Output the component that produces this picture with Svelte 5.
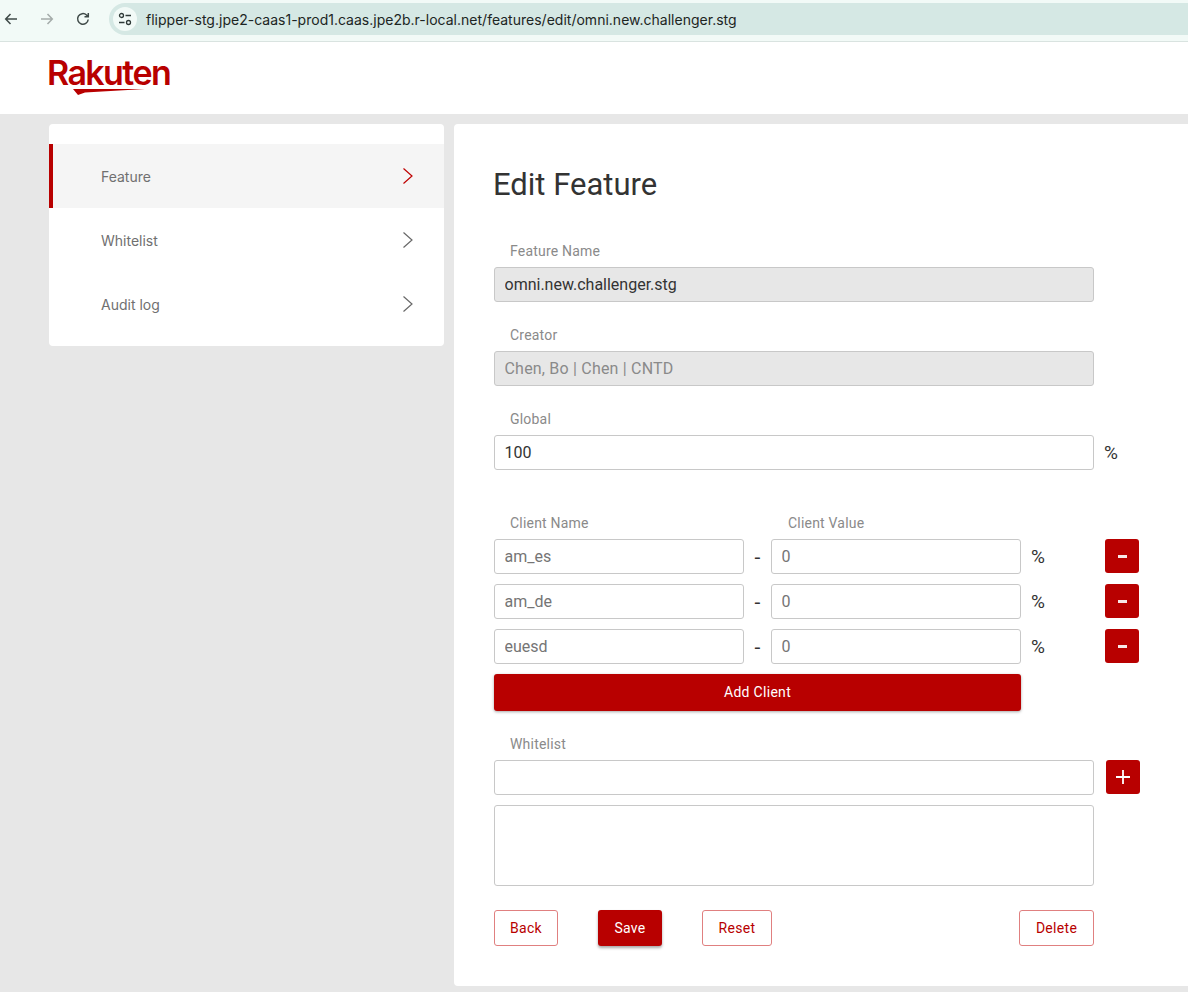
<script>
	const nav = [
		{ label: 'Feature', active: true },
		{ label: 'Whitelist', active: false },
		{ label: 'Audit log', active: false }
	];
	const clients = ['am_es', 'am_de', 'euesd'];
</script>

<div class="browser">
	<div class="tools">
		<svg width="16" height="16" viewBox="0 0 16 16" class="tool"><path d="M14 8H3M7.5 3 2.700 8l4.800 5" /></svg>
		<svg width="16" height="16" viewBox="0 0 16 16" class="tool off"><path d="M2 8h11M8.500 3l4.800 5-4.800 5" /></svg>
		<svg width="16" height="16" viewBox="0 0 16 16" class="tool"><path d="M13.200 8.500A5.300 5.300 0 1 1 11.500 4L13 5.500M13.300 2v3.800H9.500" /></svg>
	</div>
	<div class="omnibox">
		<span class="site-info">
			<svg width="14" height="14" viewBox="0 0 14 14"><circle cx="3.500" cy="3.500" r="2" /><path d="M7.500 3.500H13M1 10.500h5.500" /><circle cx="10.500" cy="10.500" r="2" /></svg>
		</span>
		<span class="url">flipper-stg.jpe2-caas1-prod1.caas.jpe2b.r-local.net/features/edit/omni.new.challenger.stg</span>
	</div>
</div>

<header>
	<div class="logo">
		<span>Rakuten</span>
		<svg width="74" height="6" viewBox="0 0 74 6"><path d="M0 0H72L12 3.500 5 6Z" /></svg>
	</div>
</header>

<div class="page">
	<aside>
		<ul>
			{#each nav as item}
				<li class:active={item.active}>
					<span>{item.label}</span>
					<svg width="12" height="18" viewBox="0 0 12 18"><path d="M1.500 1.500 10 9l-8.500 7.500" /></svg>
				</li>
			{/each}
		</ul>
	</aside>

	<main>
		<h1>Edit Feature</h1>

		<div class="field">
			<label for="name">Feature Name</label>
			<input id="name" class="dark" value="omni.new.challenger.stg" readonly />
		</div>
		<div class="field">
			<label for="creator">Creator</label>
			<input id="creator" class="muted" value="Chen, Bo | Chen | CNTD" readonly />
		</div>
		<div class="field global">
			<label for="global">Global</label>
			<div class="row">
				<input id="global" value="100" />
				<span class="pct">%</span>
			</div>
		</div>

		<div class="client-head">
			<span>Client Name</span>
			<span>Client Value</span>
		</div>
		{#each clients as c}
			<div class="client">
				<input class="soft" value={c} />
				<span class="dash">-</span>
				<input class="soft" value="0" />
				<span class="pct">%</span>
				<button class="square" aria-label="Remove client"><i class="minus"></i></button>
			</div>
		{/each}
		<button class="add">Add Client</button>

		<div class="field whitelist">
			<label for="wl">Whitelist</label>
			<div class="row">
				<input id="wl" />
				<button class="square" aria-label="Add to whitelist">
					<svg width="16" height="16" viewBox="0 0 16 16"><path d="M8 1v14M1 8h14" /></svg>
				</button>
			</div>
		</div>
		<textarea aria-label="Whitelist entries"></textarea>

		<div class="actions">
			<button class="ghost back">Back</button>
			<button class="solid">Save</button>
			<button class="ghost reset">Reset</button>
			<button class="ghost delete">Delete</button>
		</div>
	</main>
</div>

<style>
	:global(body) {
		background: #e7e7e7;
		font-family: Roboto, sans-serif;
		overflow: hidden;
	}

	.browser {
		display: flex;
		align-items: center;
		background: #f2faf7;
		border-bottom: 1px solid #d9e3e0;
		padding-bottom: 3px;
		box-sizing: border-box;
		height: 42px;
	}
	.tools {
		display: flex;
		gap: 20px;
		padding-left: 3px;
		width: 105px;
		box-sizing: border-box;
	}
	.tool {
		fill: none;
		stroke: #3f4a48;
		stroke-width: 1.5;
	}
	.tool.off {
		stroke: #a5acaa;
	}
	.omnibox {
		flex: 1;
		display: flex;
		align-items: center;
		height: 32px;
		margin-left: 4px;
		background: #d5e8e4;
		border-radius: 16px 0 0 16px;
		padding-left: 4px;
	}
	.site-info {
		display: flex;
		align-items: center;
		justify-content: center;
		width: 24px;
		height: 24px;
		border-radius: 50%;
		background: #f2faf7;
	}
	.site-info svg {
		fill: none;
		stroke: #2f3a38;
		stroke-width: 1.3;
	}
	.url {
		margin-left: 9px;
		font-family: Inter, sans-serif;
		font-size: 14px;
		letter-spacing: 0.01px;
		color: #1c2523;
		white-space: nowrap;
	}

	header {
		height: 72px;
		background: #fff;
		padding-left: 47px;
	}
	.logo {
		position: relative;
		width: 124px;
		padding-top: 9px;
	}
	.logo span {
		display: block;
		font-family: Inter, sans-serif;
		font-weight: 600;
		font-size: 34px;
		line-height: 44px;
		letter-spacing: -1.6px;
		color: #b80000;
	}
	.logo svg {
		position: absolute;
		left: 26px;
		top: 47px;
		fill: #b80000;
	}

	.page {
		display: flex;
		gap: 10px;
		padding: 10px 0 6px 49px;
	}

	aside {
		width: 395px;
		height: 222px;
		background: #fff;
		border-radius: 4px;
		padding: 20px 0;
		box-sizing: border-box;
	}
	ul {
		list-style: none;
		margin: 0;
		padding: 0;
	}
	li {
		display: flex;
		align-items: center;
		justify-content: space-between;
		height: 64px;
		padding: 0 30px 0 52px;
		font-family: Inter, sans-serif;
		font-size: 14px;
		color: #707070;
	}
	li svg {
		fill: none;
		stroke: #686868;
		stroke-width: 1.200;
		margin-top: -1px;
	}
	li.active {
		background: #f5f5f5;
		box-shadow: inset 4px 0 0 #b80000;
	}
	li.active svg {
		stroke: #bf0000;
	}

	main {
		flex: 1;
		height: 862px;
		background: #fff;
		border-radius: 4px 0 0 4px;
		padding: 41px 40px 0;
		box-sizing: border-box;
	}
	h1 {
		margin: 0 0 38px -1px;
		font-size: 31px;
		line-height: 40px;
		font-weight: 400;
		color: #333;
	}

	.field {
		margin-bottom: 25px;
	}
	label,
	.client-head span {
		display: block;
		padding-left: 16px;
		height: 16px;
		font-size: 14px;
		line-height: 16px;
		letter-spacing: 0.2px;
		color: #8a8a8a;
		margin-bottom: 8px;
	}
	input,
	textarea {
		display: block;
		box-sizing: border-box;
		width: 600px;
		height: 35px;
		padding: 0 9.5px;
		border: 1px solid #c8c8c8;
		border-radius: 3px;
		background: #fff;
		font-family: Roboto, sans-serif;
		font-size: 16px;
		color: #333;
		outline: none;
	}
	input[readonly] {
		background: #e7e7e7;
	}
	input.muted {
		color: #8a8a8a;
		letter-spacing: 0.2px;
	}
	input.soft {
		width: 250px;
		color: #757575;
	}

	.row {
		display: flex;
		align-items: center;
	}
	.pct {
		font-size: 19px;
		color: #333;
		margin-left: 10px;
	}
	.global {
		margin-bottom: 45px;
	}

	.client-head {
		display: flex;
	}
	.client-head span:first-child {
		width: 262px;
	}
	.client {
		display: flex;
		align-items: center;
		margin-bottom: 10px;
	}
	.dash {
		width: 27px;
		text-align: center;
		font-size: 21px;
		color: #333;
	}
	.client .pct {
		width: 74px;
		margin-left: 10px;
	}

	button {
		font-family: Roboto, sans-serif;
		font-size: 14px;
		font-weight: 400;
		letter-spacing: 0.3px;
		cursor: pointer;
		box-sizing: border-box;
		border-radius: 3px;
	}
	.square {
		display: flex;
		align-items: center;
		justify-content: center;
		align-self: flex-start;
		width: 34px;
		height: 34px;
		padding: 0;
		border: none;
		background: #b80000;
	}
	.minus {
		display: block;
		width: 9px;
		height: 3px;
		background: #f8e8e8;
	}
	.square svg {
		fill: none;
		stroke: #fff;
		stroke-width: 1.800;
	}
	.add {
		display: block;
		width: 527px;
		height: 37px;
		padding: 0 0 2px;
		border: none;
		background: #b80000;
		color: #fff;
		box-shadow: 0 1px 3px rgba(0, 0, 0, 0.35);
	}
	.whitelist {
		margin: 25px 0 10px;
	}
	.whitelist .square {
		margin-left: 12px;
	}
	textarea {
		height: 81px;
		resize: none;
	}

	.actions {
		display: flex;
		width: 600px;
		margin-top: 24px;
	}
	.actions button {
		height: 36px;
		padding: 0;
	}
	.ghost {
		border: 1px solid #e08080;
		background: #fff;
		color: #b80000;
	}
	.solid {
		width: 64px;
		margin: 0 40px;
		border: none;
		background: #b80000;
		color: #fff;
		box-shadow: 0 2px 3px rgba(0, 0, 0, 0.35);
	}
	.back {
		width: 64px;
	}
	.reset {
		width: 70px;
	}
	.delete {
		width: 75px;
		margin-left: auto;
	}
</style>
